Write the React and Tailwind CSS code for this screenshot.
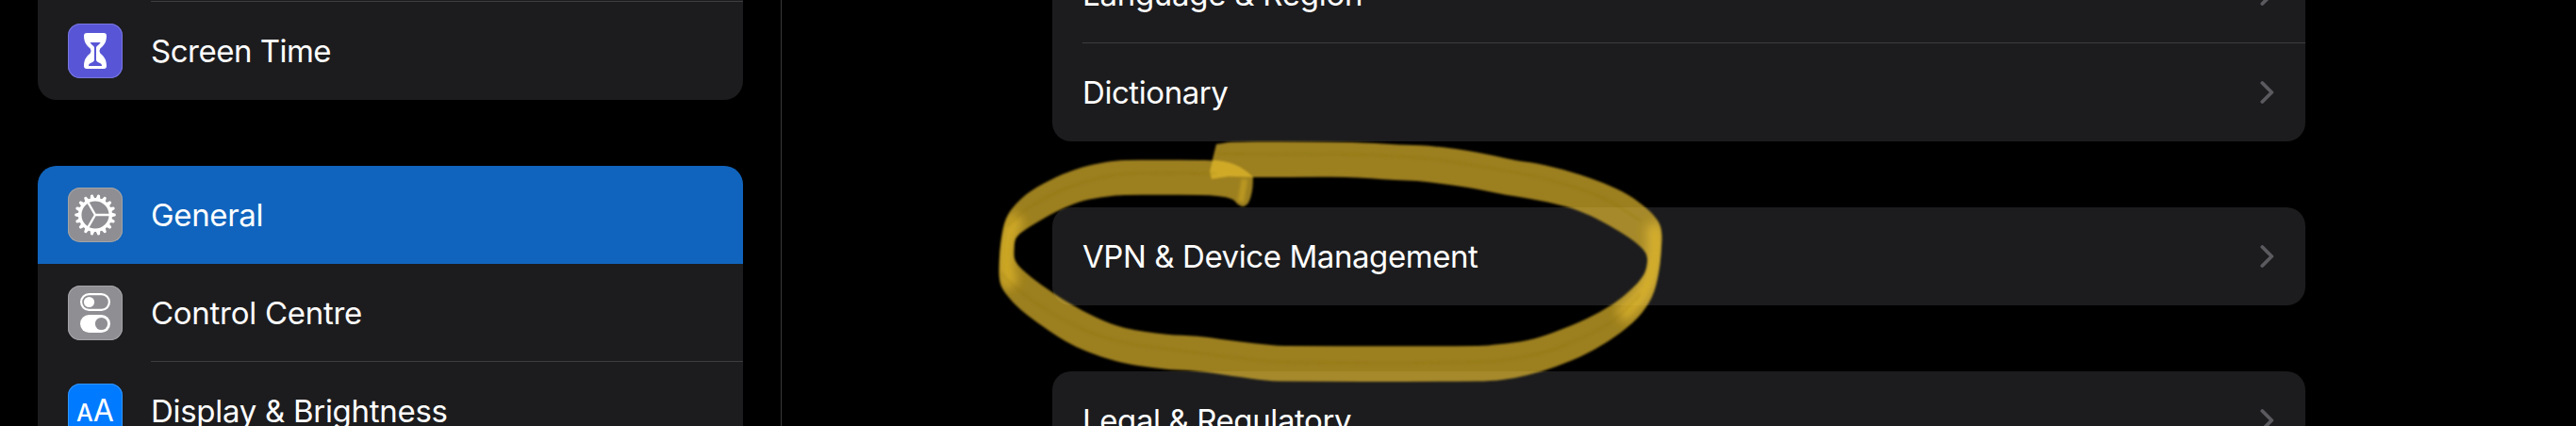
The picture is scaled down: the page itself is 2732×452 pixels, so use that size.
import React from "react";

const OUTER = [
  [1290, 153], [1307, 150.7], [1433, 151], [1483, 153.5], [1515, 154.7], [1567, 161.7], [1607, 170], [1630, 173.5],
  [1667, 182.7], [1700, 194], [1727, 207], [1747, 221.7], [1758, 234], [1762, 245], [1762, 263], [1759, 290],
  [1752, 315], [1737, 337], [1713, 357], [1683, 375], [1650, 389], [1620, 398], [1593, 403], [1567, 404.5],
  [1357, 404.5], [1327, 401.7], [1287, 396], [1260, 393], [1237, 391.7], [1207, 388], [1183, 383], [1153, 373],
  [1130, 362], [1107, 347], [1083, 329], [1067, 312], [1060.7, 300], [1059.7, 280], [1062, 253], [1067, 232],
  [1077, 217], [1093, 203], [1120, 188], [1147, 177.7], [1173, 172], [1193, 170], [1273, 170], [1293, 171],
  [1313, 176], [1325, 182.7], [1329, 187],
];
const END_CAP = [[1329, 187], [1328, 202], [1324, 215], [1318.5, 219], [1313, 217]];
const INNER = [
  [1313, 217], [1307, 211.5], [1293, 208.3], [1273, 207], [1193, 207], [1173, 208.7], [1150, 212.7], [1130, 220],
  [1107, 231.7], [1087, 244], [1078, 252], [1075.7, 262], [1077, 277], [1090, 291], [1110, 306], [1133, 321],
  [1163, 337], [1193, 348], [1237, 354.7], [1270, 356.7], [1317, 362.7], [1347, 366], [1363, 367], [1567, 367],
  [1590, 365.3], [1620, 361], [1650, 351.7], [1683, 338], [1710, 323], [1730, 307], [1743, 292], [1747, 278],
  [1745, 268], [1733, 256], [1713, 243], [1687, 229], [1660, 219], [1623, 211], [1597, 206.7], [1557, 199],
  [1527, 194.7], [1503, 192], [1480, 191], [1427, 188], [1327, 188], [1303, 187.3], [1285, 190],
];

// Smooth curve through the given points, tangents scaled to each segment.
function curve(points) {
  const tangent = (i) => {
    const a = points[Math.max(i - 1, 0)];
    const b = points[Math.min(i + 1, points.length - 1)];
    const d = Math.hypot(b[0] - a[0], b[1] - a[1]);
    return [(b[0] - a[0]) / d, (b[1] - a[1]) / d];
  };
  let out = "";
  for (let i = 0; i < points.length - 1; i++) {
    const p = points[i];
    const q = points[i + 1];
    const l = Math.hypot(q[0] - p[0], q[1] - p[1]) / 3;
    const s = tangent(i);
    const t = tangent(i + 1);
    out += `C${p[0] + s[0] * l} ${p[1] + s[1] * l} ${q[0] - t[0] * l} ${q[1] - t[1] * l} ${q[0]} ${q[1]}`;
  }
  return out;
}

const RIBBON = `M1290 153${curve(OUTER)}${curve(END_CAP)}${curve(INNER)}L1283 188L1283 182L1286 169Z`;
const GRAIN_BOTTOM = [
  [1062, 290], [1078, 306], [1110, 329], [1150, 350], [1190, 363], [1237, 370], [1290, 377], [1357, 384], [1567, 384],
  [1620, 378], [1660, 366], [1710, 341], [1740, 312],
];
const GRAIN_TOP = [[1290, 163], [1440, 164], [1510, 168], [1567, 176], [1640, 190], [1700, 210], [1740, 234]];
const GRAIN_LEFT = [[1068, 240], [1090, 221], [1130, 200], [1170, 188], [1200, 184], [1290, 184]];

function Marker() {
  return (
    <svg className="pointer-events-none absolute inset-0" width="2732" height="452" viewBox="0 0 2732 452" fill="none">
      <defs>
        <clipPath id="ribbon"><path d={RIBBON} /></clipPath>
        <filter id="edge" x="-2%" y="-5%" width="104%" height="110%"><feGaussianBlur stdDeviation="0.9" /></filter>
        <filter id="soft" x="1000" y="100" width="800" height="340" filterUnits="userSpaceOnUse"><feGaussianBlur stdDeviation="6" /></filter>
        <filter id="grain" x="1000" y="100" width="800" height="340" filterUnits="userSpaceOnUse"><feGaussianBlur stdDeviation="1.2" /></filter>
      </defs>
      <g filter="url(#edge)">
        <path d={RIBBON} fill="#fbcd30" fillOpacity="0.62" />
        <path d="M1286 170C1302 170 1318 176 1329 188L1303 187.3L1285 190L1283 182Z" fill="#fbcd30" fillOpacity="0.55" />
        <g clipPath="url(#ribbon)">
          <path d="M1080 230C1070 242 1067 256 1067 276C1067 288 1069 296 1073 304" stroke="#f9cb30" strokeOpacity="0.58" strokeWidth="17" filter="url(#soft)" />
          <path d="M1752 238C1758 248 1757 272 1750 296C1744 312 1734 324 1718 336" stroke="#f9cb30" strokeOpacity="0.6" strokeWidth="17" filter="url(#soft)" />
          <path d="M1320 190L1316 214" stroke="#fbcd30" strokeOpacity="0.3" strokeWidth="7" filter="url(#grain)" />
          <g stroke="#7a6a12" strokeOpacity="0.22" strokeWidth="2" filter="url(#grain)">
            <path d={"M1290 163" + curve(GRAIN_TOP)} />
            <path d={"M1062 290" + curve(GRAIN_BOTTOM)} />
            <path d={"M1068 240" + curve(GRAIN_LEFT)} />
          </g>
        </g>
      </g>
    </svg>
  );
}

const TEETH = Array.from({ length: 18 }, (_, i) => i * 20);

function GearIcon() {
  return (
    <svg width="58" height="58" viewBox="-29 -29 58 58" fill="none" stroke="#fff">
      <circle r="16.3" strokeWidth="3.5" />
      {TEETH.map((a) => (
        <path key={a} d="M17 -2.4L21.4 -1.3Q22.4 0 21.4 1.3L17 2.4Z" fill="#fff" stroke="none" transform={`rotate(${a})`} />
      ))}
      <path d="M0 0H16M0 0L-8 -13.9M0 0L-8 13.9" strokeWidth="2.4" />
    </svg>
  );
}

function HourglassIcon() {
  return (
    <svg width="58" height="58" viewBox="0 0 58 58">
      <path fill="#fff" d="M20 10H38Q41 10 41 13C41 21 37 24 34.3 26.5Q32.6 29 34.3 31.5C37 34 41 37 41 45Q41 48 38 48H20Q17 48 17 45C17 37 21 34 23.7 31.5Q25.4 29 23.7 26.5C21 24 17 21 17 13Q17 10 20 10Z" />
      <path fill="#5856d6" d="M23.5 20H34.7Q33 22.6 30.8 24Q30 24.6 30 26V38.5Q30 40 31.5 40.7L35 42.5Q36 43.2 36 45H22Q22 43.2 23 42.5L26.5 40.7Q28 40 28 38.5V26Q28 24.6 27.2 24Q25 22.6 23.5 20Z" />
    </svg>
  );
}

function TogglesIcon() {
  return (
    <svg width="58" height="58" viewBox="0 0 58 58">
      <rect x="14.1" y="9.1" width="29.8" height="16.8" rx="8.4" fill="none" stroke="#fff" strokeWidth="2.2" />
      <circle cx="22.5" cy="17.5" r="5.6" fill="#fff" />
      <rect x="13" y="31" width="32" height="19" rx="9.5" fill="#fff" />
      <circle cx="35.5" cy="40.5" r="6.6" fill="#8e8e93" />
    </svg>
  );
}

function TextSizeIcon() {
  return (
    <div className="flex h-[58px] w-[58px] items-baseline justify-center pt-[9px] leading-[40px]">
      <span className="text-[25px] font-medium">A</span>
      <span className="text-[32px]">A</span>
    </div>
  );
}

function SidebarRow({ icon, tile, label, spacing, active, divider }) {
  return (
    <div className={"flex h-[104px] shrink-0 pl-8 " + (active ? "bg-[#1064bd]" : "")}>
      <div className="flex w-[88px] shrink-0 items-center">
        <div className={"h-[58px] w-[58px] overflow-hidden rounded-[13px] " + tile}>{icon}</div>
      </div>
      <div className={"flex grow items-center " + (divider ? "border-b border-[#3d3d40]" : "")}>
        <span className={"whitespace-nowrap " + spacing}>{label}</span>
      </div>
    </div>
  );
}

function DetailRow({ label, spacing, divider }) {
  return (
    <div className="flex h-[104px] shrink-0 pl-8">
      <div className={"flex grow items-center justify-between pr-[33px] " + (divider ? "border-b border-[#3d3d40]" : "")}>
        <span className={"whitespace-nowrap " + spacing}>{label}</span>
        <svg width="15" height="26" viewBox="0 0 15 26" fill="none" stroke="#5a5a5f" strokeWidth="3.8" strokeLinecap="round" strokeLinejoin="round">
          <path d="M2.3 3L12.3 13L2.3 23" />
        </svg>
      </div>
    </div>
  );
}

export default function App() {
  return (
    <div className="relative flex h-[452px] w-[2732px] overflow-hidden bg-black font-['Inter',sans-serif] text-[33px] leading-[40px] text-white">
      <aside className="flex w-[829px] shrink-0 flex-col gap-[70px] border-r border-[#38383a] pr-10 pl-10">
        <section className="flex h-[106px] shrink-0 flex-col rounded-b-[20px] bg-[#1c1c1e]">
          <div className="ml-[120px] h-[2px] border-b border-[#3d3d40]" />
          <SidebarRow icon={<HourglassIcon />} tile="bg-[#5856d6] shadow-[inset_0_0_0_1px_#7977de]" label="Screen Time" spacing="tracking-[-0.5px]" />
        </section>
        <section className="flex shrink-0 flex-col overflow-hidden rounded-[20px] bg-[#1c1c1e]">
          <SidebarRow active icon={<GearIcon />} tile="bg-[#8e8e93] shadow-[inset_0_0_0_1px_#a4a4a8]" label="General" spacing="tracking-[-0.35px]" />
          <SidebarRow divider icon={<TogglesIcon />} tile="bg-[#8e8e93] shadow-[inset_0_0_0_1px_#a4a4a8]" label="Control Centre" spacing="tracking-[-0.28px]" />
          <SidebarRow icon={<TextSizeIcon />} tile="bg-[#007aff] shadow-[inset_0_0_0_1px_#3395ff]" label="Display & Brightness" spacing="tracking-[-0.29px]" />
        </section>
      </aside>
      <main className="-mt-[58px] flex grow flex-col gap-[70px] pr-[287px] pl-[287px]">
        <section className="flex shrink-0 flex-col rounded-b-[20px] bg-[#1c1c1e]">
          <DetailRow divider label="Language & Region" spacing="tracking-[-0.27px]" />
          <DetailRow label="Dictionary" spacing="tracking-[-0.43px]" />
        </section>
        <section className="flex shrink-0 flex-col rounded-[20px] bg-[#1c1c1e]">
          <DetailRow label="VPN & Device Management" spacing="tracking-[-0.42px]" />
        </section>
        <section className="flex shrink-0 flex-col rounded-[20px] bg-[#1c1c1e]">
          <DetailRow label="Legal & Regulatory" spacing="tracking-[-0.41px]" />
        </section>
      </main>
      <Marker />
    </div>
  );
}
